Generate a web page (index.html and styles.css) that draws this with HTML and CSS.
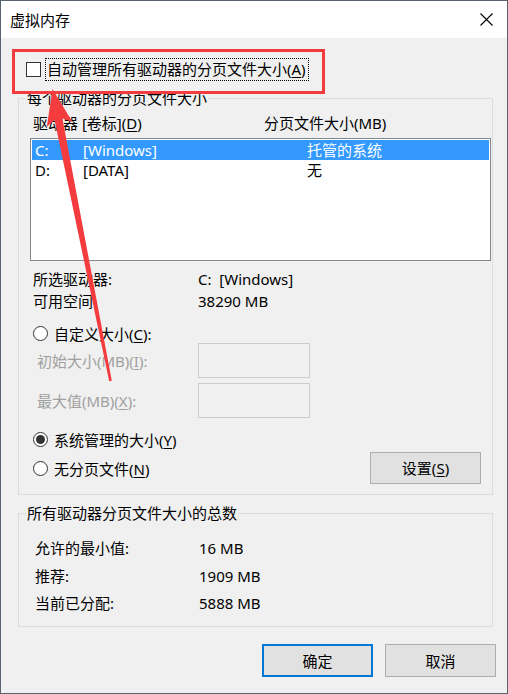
FILE: index.html
```html
<!DOCTYPE html>
<html lang="zh-CN">
<head>
<meta charset="utf-8">
<title>虚拟内存</title>
<link rel="stylesheet" href="styles.css">
</head>
<body>
<div class="window">
  <div class="titlebar">
    <span class="title">虚拟内存</span>
    <svg class="close" width="13" height="13" viewBox="0 0 13 13"><path d="M0.5 0.5 L12.5 12.5 M12.5 0.5 L0.5 12.5" stroke="#000" stroke-width="1.1" fill="none"/></svg>
  </div>
  <div class="content">
    <div class="auto-row">
      <span class="checkbox"></span>
      <span class="focus-label">自动管理所有驱动器的分页文件大小(<u>A</u>)</span>
    </div>

    <div class="group group-drives">
      <div class="group-title">每个驱动器的分页文件大小</div>
      <div class="list-head"><span class="col-drive">驱动器 [卷标](<u>D</u>)</span><span>分页文件大小(MB)</span></div>
      <div class="listbox">
        <div class="list-row selected"><span>C:</span><span>[Windows]</span><span>托管的系统</span></div>
        <div class="list-row"><span>D:</span><span>[DATA]</span><span>无</span></div>
      </div>
      <div class="info-row first"><span class="info-label">所选驱动器:</span><span>C:&nbsp; [Windows]</span></div>
      <div class="info-row"><span class="info-label">可用空间</span><span>38290 MB</span></div>

      <div class="radio-row custom"><span class="radio"></span><span>自定义大小(<u>C</u>):</span></div>
      <div class="input-row"><span class="input-label">初始大小(MB)(<u>I</u>):</span><span class="textbox"></span></div>
      <div class="input-row second"><span class="input-label">最大值(MB)(<u>X</u>):</span><span class="textbox"></span></div>
      <div class="radio-row system"><span class="radio checked"></span><span>系统管理的大小(<u>Y</u>)</span></div>
      <div class="last-row">
        <div class="radio-inline"><span class="radio"></span><span>无分页文件(<u>N</u>)</span></div>
        <button class="btn set-btn">设置(<u>S</u>)</button>
      </div>
    </div>

    <div class="group group-total">
      <div class="group-title">所有驱动器分页文件大小的总数</div>
      <div class="total-row first"><span class="total-label">允许的最小值:</span><span>16 MB</span></div>
      <div class="total-row"><span class="total-label">推荐:</span><span>1909 MB</span></div>
      <div class="total-row"><span class="total-label">当前已分配:</span><span>5888 MB</span></div>
    </div>

    <div class="button-row">
      <button class="btn primary">确定</button>
      <button class="btn">取消</button>
    </div>
  </div>

  <svg class="annotation" width="508" height="694" viewBox="0 0 508 694">
    <rect x="13.5" y="50.5" width="310" height="42" fill="none" stroke="#f43b3d" stroke-width="3"/>
    <polygon fill="#f43b3d" points="52.5,89 72.3,121.8 62.4,118.6 111.8,380.7 109.2,381.3 54.6,120.2 46.8,126.8"/>
  </svg>
</div>
</body>
</html>
```

FILE: styles.css
```css
* {
  box-sizing: border-box;
}

html, body {
  margin: 0;
  padding: 0;
  background: #f0f0f0;
}

body {
  font-family: "Noto Sans", "Noto Sans CJK SC", sans-serif;
  font-size: 15px;
  color: #000;
}

u {
  text-underline-offset: 2px;
}

.window {
  position: relative;
  width: 508px;
  height: 694px;
  border: 1px solid #59636e;
  display: flex;
  flex-direction: column;
  background: #f0f0f0;
}

.titlebar {
  height: 37px;
  background: #fff;
  display: flex;
  align-items: center;
  justify-content: space-between;
  padding: 0 14px 0 9px;
  flex: none;
}

.title {
  line-height: 20px;
}

.close {
  display: block;
}

.content {
  flex: 1;
  padding-top: 20px;
}

.auto-row {
  display: flex;
  align-items: center;
  height: 23px;
  padding-left: 25px;
}

.checkbox {
  width: 15px;
  height: 15px;
  border: 1px solid #333;
  background: #fff;
  margin-right: 4px;
  flex: none;
}

.focus-label {
  height: 23px;
  line-height: 21px;
  border: 1px dotted #000;
  padding: 0 2px 0 1px;
}

.group {
  margin-left: 17px;
  width: 475px;
  border: 1px solid #dcdcdc;
}

.group-drives {
  margin-top: 17px;
  padding-bottom: 10px;
}

.group-total {
  margin-top: 18px;
  padding-bottom: 8.5px;
}

.group-title {
  margin-top: -11px;
  margin-left: 7px;
  width: fit-content;
  height: 20px;
  line-height: 20px;
  padding: 0 1px;
  background: #f0f0f0;
}

.list-head {
  margin-top: 5px;
  height: 20px;
  line-height: 20px;
  display: flex;
  padding-left: 14px;
}

.col-drive {
  width: 231px;
}

.listbox {
  margin: 5px 0 0 11px;
  width: 461px;
  height: 123px;
  border: 1px solid #828790;
  background: #fff;
  padding: 1px;
}

.list-row {
  display: grid;
  grid-template-columns: 48px 224px 1fr;
  height: 20px;
  line-height: 20px;
  padding-left: 3px;
}

.list-row.selected {
  background: #3399ff;
  color: #fff;
}

.info-row {
  display: flex;
  height: 22px;
  line-height: 22px;
  padding-left: 14px;
}

.info-row.first {
  margin-top: 7px;
}

.info-label {
  width: 165px;
}

.radio-row {
  display: flex;
  align-items: center;
  height: 20px;
  padding-left: 14px;
  gap: 6px;
}

.radio-row.custom,
.radio-row.system {
  margin-top: 11px;
}

.radio-inline {
  display: flex;
  align-items: center;
  gap: 6px;
}

.radio {
  width: 15px;
  height: 15px;
  border: 1px solid #333;
  border-radius: 50%;
  background: #fff;
  flex: none;
  display: flex;
  align-items: center;
  justify-content: center;
}

.radio.checked::after {
  content: "";
  width: 9px;
  height: 9px;
  border-radius: 50%;
  background: #333;
}

.input-row {
  display: flex;
  align-items: center;
  height: 35px;
  padding-left: 18px;
  color: #a0a0a0;
}

.input-row.second {
  margin-top: 5px;
}

.input-label {
  width: 161px;
}

.textbox {
  width: 112px;
  height: 35px;
  border: 1px solid #cccccc;
  background: #f0f0f0;
}

.last-row {
  display: flex;
  align-items: center;
  justify-content: space-between;
  height: 32px;
  margin-top: 3px;
  padding: 0 11px 0 14px;
}

.btn {
  font: inherit;
  color: #000;
  width: 111px;
  height: 33px;
  background: #e1e1e1;
  border: 1px solid #adadad;
  padding: 0;
  line-height: 20px;
}

.set-btn {
  height: 32px;
}

.btn.primary {
  border: 2px solid #0078d7;
}

.total-row {
  display: flex;
  height: 27.5px;
  line-height: 27.5px;
  padding-left: 16px;
}

.total-row.first {
  margin-top: 12px;
}

.total-label {
  width: 164px;
}

.button-row {
  display: flex;
  justify-content: flex-end;
  gap: 12px;
  margin-top: 17px;
  padding-right: 11px;
}

.annotation {
  position: absolute;
  left: -1px;
  top: -1px;
  pointer-events: none;
}
```
